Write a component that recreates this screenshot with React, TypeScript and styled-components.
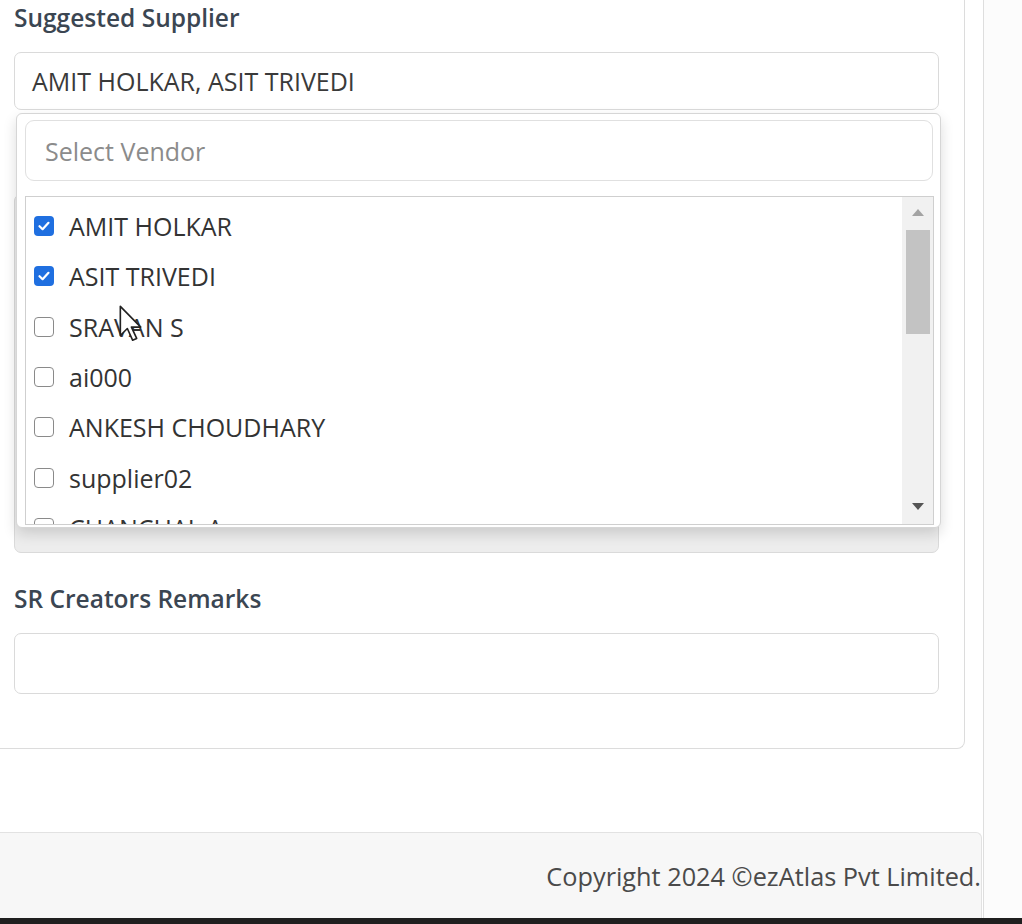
import React from "react";
import styled, { createGlobalStyle } from "styled-components";

const Global = createGlobalStyle`
  html, body { margin: 0; padding: 0; background: #ffffff; }
  body { font-family: "Open Sans", "Noto Sans", Arial, sans-serif; overflow: hidden; }
  * { box-sizing: border-box; }
`;

const Page = styled.div`
  width: 1022px;
  height: 924px;
  display: flex;
  flex-direction: column;
  overflow: hidden;
`;

const Body = styled.div`
  flex: 1;
  display: flex;
  min-height: 0;
`;

const Main = styled.div`
  width: 984px;
  border-right: 1px solid #dedede;
  display: flex;
  flex-direction: column;
`;

const SideStrip = styled.div`
  flex: 1;
  background: #fcfcfc;
`;

const CardWrap = styled.div`
  padding-right: 18px;
`;

const Card = styled.div`
  margin-left: -12px;
  padding: 3px 27px 54px 25px;
  border: 1px solid #dcdcdc;
  border-top: none;
  border-radius: 0 0 8px 8px;
  background: #fff;
`;

const Field = styled.div<{ $gap?: number }>`
  position: relative;
  display: flex;
  flex-direction: column;
  margin-top: ${(p) => p.$gap ?? 0}px;
`;

const Label = styled.div<{ $hidden?: boolean }>`
  font-size: 24.5px;
  line-height: 30px;
  font-weight: 600;
  color: #3b4652;
  margin-bottom: 19px;
  visibility: ${(p) => (p.$hidden ? "hidden" : "visible")};
`;

const Box = styled.div<{ $h: number; $bg?: string }>`
  height: ${(p) => p.$h}px;
  width: 925px;
  border: 1px solid #dadada;
  border-radius: 7px;
  background: ${(p) => p.$bg ?? "#fff"};
  display: flex;
  align-items: center;
  padding-left: 17px;
  font-size: 25px;
  color: #3a3a3a;
`;

const Dropdown = styled.div`
  position: absolute;
  top: 110px;
  left: 2px;
  width: 925px;
  height: 415px;
  background: #fff;
  border: 1px solid #d6d6d6;
  border-radius: 6px;
  box-shadow: 0 6px 14px rgba(0, 0, 0, 0.14);
  padding: 6px 7px 2px 8px;
  display: flex;
  flex-direction: column;
  z-index: 5;
`;

const Search = styled.div`
  height: 61px;
  border: 1px solid #e0e0e0;
  border-radius: 9px;
  display: flex;
  align-items: center;
  padding-left: 19px;
  font-size: 25px;
  color: #8b8b8b;
`;

const ListBox = styled.div`
  margin-top: 15px;
  flex: 1;
  min-height: 0;
  border: 1px solid #cfcfcf;
  display: flex;
  overflow: hidden;
  width: 909px;
`;

const Items = styled.div`
  flex: 1;
  padding: 4px 0 0 8px;
  overflow: hidden;
`;

const Item = styled.div`
  height: 50.3px;
  display: flex;
  align-items: center;
  gap: 15px;
  font-size: 25px;
  color: #333;
  flex-shrink: 0;
  white-space: nowrap;
`;

const Check = styled.span<{ $on?: boolean }>`
  width: 20px;
  height: 20px;
  border-radius: 4px;
  flex-shrink: 0;
  border: ${(p) => (p.$on ? "none" : "1.5px solid #8a8a8a")};
  background: ${(p) => (p.$on ? "#1f6fe0" : "#fff")};
  display: flex;
  align-items: center;
  justify-content: center;
`;

const Scroll = styled.div`
  width: 31px;
  background: #f1f1f1;
  display: flex;
  flex-direction: column;
  align-items: center;
  padding: 12px 0 14px;
`;

const Arrow = styled.div<{ $down?: boolean }>`
  width: 0;
  height: 0;
  border-left: 6px solid transparent;
  border-right: 6px solid transparent;
  ${(p) =>
    p.$down
      ? "border-top: 7px solid #555;"
      : "border-bottom: 7px solid #a3a3a3;"}
`;

const Thumb = styled.div`
  width: 24px;
  height: 104px;
  margin-top: 14px;
  background: #c3c3c3;
`;

const ScrollFill = styled.div`
  flex: 1;
`;

const Cursor = styled.svg`
  position: absolute;
  left: 104px;
  top: 301px;
  z-index: 6;
`;

const Gap = styled.div`
  flex: 1;
`;

const Footer = styled.div`
  height: 86px;
  width: 982px;
  background: #f7f7f7;
  border-top: 1px solid #e2e2e2;
  border-right: 1px solid #e2e2e2;
  border-top-right-radius: 6px;
  display: flex;
  align-items: center;
  justify-content: flex-end;
  font-size: 25.3px;
  color: #4a4a4a;
  white-space: nowrap;
`;

const Bottom = styled.div`
  height: 6px;
  background: #1f1f1f;
`;

const vendors: { name: string; on?: boolean }[] = [
  { name: "AMIT HOLKAR", on: true },
  { name: "ASIT TRIVEDI", on: true },
  { name: "SRAVAN S" },
  { name: "ai000" },
  { name: "ANKESH CHOUDHARY" },
  { name: "supplier02" },
  { name: "CHANCHAL A" },
];

export default function App() {
  return (
    <Page>
      <Global />
      <Body>
        <Main>
          <CardWrap>
            <Card>
              <Field>
                <Label>Suggested Supplier</Label>
                <Box $h={58}>AMIT HOLKAR, ASIT TRIVEDI</Box>
                <Dropdown>
                  <Search>Select Vendor</Search>
                  <ListBox>
                    <Items>
                      {vendors.map((v) => (
                        <Item key={v.name}>
                          <Check $on={v.on}>
                            {v.on && (
                              <svg width="14" height="14" viewBox="0 0 14 14">
                                <path
                                  d="M2.5 7.2 L5.6 10.2 L11.5 3.8"
                                  fill="none"
                                  stroke="#fff"
                                  strokeWidth="2.2"
                                  strokeLinecap="round"
                                  strokeLinejoin="round"
                                />
                              </svg>
                            )}
                          </Check>
                          {v.name}
                        </Item>
                      ))}
                    </Items>
                    <Scroll>
                      <Arrow />
                      <Thumb />
                      <ScrollFill />
                      <Arrow $down />
                    </Scroll>
                  </ListBox>
                </Dropdown>
                <Cursor width="28" height="42" viewBox="0 0 24 36">
                  <path
                    d="M2 2 L2 27 L8 21 L12.5 31 L16 29.5 L11.5 19.8 L19.5 19.8 Z"
                    fill="#fff"
                    stroke="#222"
                    strokeWidth="1.4"
                    strokeLinejoin="round"
                  />
                </Cursor>
              </Field>
              <Field $gap={35}>
                <Label $hidden>Description</Label>
                <Box $h={359} $bg="#ededed" />
              </Field>
              <Field $gap={31}>
                <Label>SR Creators Remarks</Label>
                <Box $h={61} />
              </Field>
            </Card>
          </CardWrap>
          <Gap />
          <Footer>Copyright 2024 ©ezAtlas Pvt Limited.</Footer>
        </Main>
        <SideStrip />
      </Body>
      <Bottom />
    </Page>
  );
}
